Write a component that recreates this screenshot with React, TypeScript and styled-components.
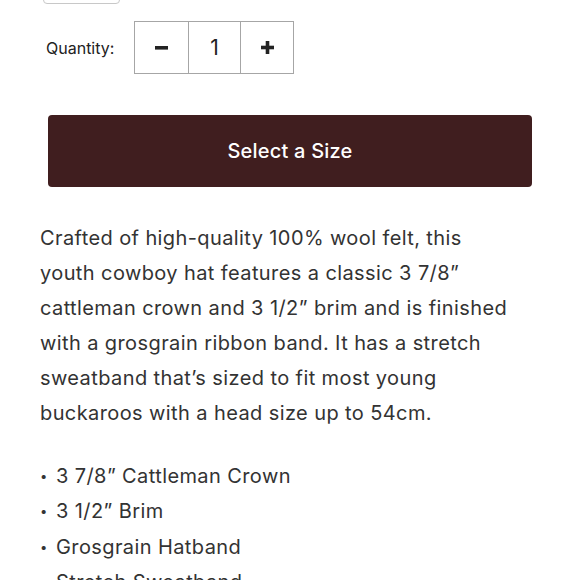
import React from "react";
import styled, { createGlobalStyle } from "styled-components";

const Global = createGlobalStyle`
  html, body { margin: 0; padding: 0; background: #fff; }
  body { font-family: "Inter", "Liberation Sans", sans-serif; color: #333; overflow: hidden; }
  * { box-sizing: border-box; }
`;

const Page = styled.div`
  width: 580px;
  height: 580px;
  overflow: hidden;
  padding: 0 40px;
`;

const SizeBox = styled.div`
  margin-top: -36px;
  margin-left: 3px;
  width: 77px;
  height: 40px;
  border: 1px solid #c8c8c8;
  border-radius: 4px;
`;

const QtyRow = styled.div`
  display: flex;
  align-items: center;
  margin-top: 17px;
  padding-left: 6px;
`;

const QtyLabel = styled.span`
  font-size: 16px;
  color: #222;
  width: 88px;
`;

const Stepper = styled.div`
  display: grid;
  grid-template-columns: 53px 52px 53px;
  height: 53px;
  border: 1px solid #a6a6a6;
`;

const Cell = styled.div<{ $divider?: boolean }>`
  display: flex;
  align-items: center;
  justify-content: center;
  border-left: ${(p) => (p.$divider ? "1px solid #a6a6a6" : "none")};
  font-size: 21px;
  color: #222;
`;

const CtaButton = styled.button`
  display: block;
  margin: 41px 0 0 8px;
  width: 484px;
  height: 72px;
  background: #401e1f;
  border: none;
  border-radius: 4px;
  color: #fff;
  font-family: "Inter", "Liberation Sans", sans-serif;
  font-size: 20px;
  font-weight: 500;
  letter-spacing: 0.2px;
`;

const Description = styled.p`
  margin: 34px 0 0;
  width: 470px;
  font-size: 20px;
  line-height: 35px;
  letter-spacing: 0.4px;
  color: #333;
`;

const Bullets = styled.ul`
  list-style: none;
  margin: 28px 0 0;
  padding: 0;
`;

const Bullet = styled.li`
  display: flex;
  font-size: 20px;
  line-height: 35.3px;
  letter-spacing: 0.4px;
  color: #333;
  &::before {
    content: "•";
    width: 16px;
    font-size: 13px;
    flex: none;
  }
`;

const Minus = () => (
  <svg width="13" height="4" viewBox="0 0 13 4">
    <rect x="0" y="0" width="13" height="3.6" fill="#222" />
  </svg>
);

const Plus = () => (
  <svg width="13" height="13" viewBox="0 0 13 13">
    <rect x="0" y="4.7" width="13" height="3.6" fill="#222" />
    <rect x="4.7" y="0" width="3.6" height="13" fill="#222" />
  </svg>
);

export default function App() {
  return (
    <>
      <Global />
      <Page>
        <SizeBox />
        <QtyRow>
          <QtyLabel>Quantity:</QtyLabel>
          <Stepper>
            <Cell><Minus /></Cell>
            <Cell $divider>1</Cell>
            <Cell $divider><Plus /></Cell>
          </Stepper>
        </QtyRow>
        <CtaButton>Select a Size</CtaButton>
        <Description>
          Crafted of high-quality 100% wool felt, this youth cowboy hat features a classic 3 7/8” cattleman crown and 3 1/2” brim and is finished with a grosgrain ribbon band. It has a stretch sweatband that’s sized to fit most young buckaroos with a head size up to 54cm.
        </Description>
        <Bullets>
          <Bullet>3 7/8” Cattleman Crown</Bullet>
          <Bullet>3 1/2” Brim</Bullet>
          <Bullet>Grosgrain Hatband</Bullet>
          <Bullet>Stretch Sweatband</Bullet>
        </Bullets>
      </Page>
    </>
  );
}
